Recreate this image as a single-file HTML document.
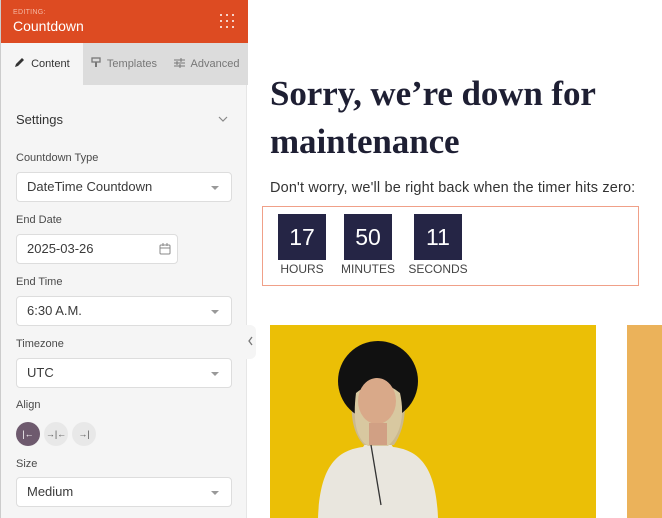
<!DOCTYPE html>
<html><head><meta charset="utf-8"><style>
*{box-sizing:border-box;margin:0;padding:0}
body{width:662px;height:518px;overflow:hidden;background:#fff;font-family:"Liberation Sans",sans-serif;position:relative}
.side{position:absolute;left:0;top:0;width:247px;height:518px;background:#f5f5f5;border-left:1px solid #ccc;border-right:1px solid #e6e6e6}
.hdr{position:absolute;left:0;top:0;width:247px;height:43px;background:#dd4b22}
.hdr .e{position:absolute;left:12px;top:9px;font-size:7px;color:#f4b8a5;letter-spacing:.3px}
.hdr .t{position:absolute;left:12px;top:18px;font-size:14px;color:#fff}
.dots{position:absolute;left:219px;top:14px;width:14px;height:14px;display:grid;grid-template-columns:repeat(3,2px);gap:4px}
.dots i{width:2px;height:2px;background:#fff;border-radius:1px}
.tabs{position:absolute;left:0;top:43px;width:247px;height:42px}
.tab{position:absolute;top:0;height:42px;font-size:11px;line-height:42px;color:#777}
.lbl{position:absolute;left:15px;font-size:11px;color:#4a4a4a}
.inp{position:absolute;left:15px;width:216px;height:30px;background:#fff;border:1px solid #ddd;border-radius:4px;font-size:13px;color:#3a3a3a;line-height:28px;padding-left:10px}
.inp .car{position:absolute;right:12px;top:13px;border-left:4px solid transparent;border-right:4px solid transparent;border-top:4px solid #999}
.al{position:absolute;top:422px;width:24px;height:24px;border-radius:12px;background:#e8e8e8;font-size:9px;color:#555;text-align:center;line-height:24px}
h1{position:absolute;left:270px;top:70px;font-family:"Liberation Serif",serif;font-weight:bold;font-size:35px;line-height:48px;color:#1e1f33;letter-spacing:-.1px}
.sub{position:absolute;left:270px;top:180px;font-size:14.5px;color:#333;letter-spacing:.15px}
.cd{position:absolute;left:262px;top:206px;width:377px;height:80px;border:1.5px solid #f0a088}
.box{position:absolute;top:214px;width:48px;height:46px;background:#252545;color:#fff;font-size:23px;text-align:center;line-height:46px}
.cl{position:absolute;top:262px;font-size:12px;color:#444;text-align:center}
</style></head><body>
<div class="side">
 <div class="hdr"><div class="e">EDITING:</div><div class="t">Countdown</div>
  <div class="dots"><i></i><i></i><i></i><i></i><i></i><i></i><i></i><i></i><i></i></div></div>
 <div class="tabs">
  <div style="position:absolute;left:82px;top:0;width:165px;height:42px;background:#dcdcdc"></div>
  <div class="tab" style="left:13px;color:#333"><svg width="11" height="11" viewBox="0 0 11 11" style="vertical-align:-1px"><path d="M1 10 L2 7 L8 1 L10 3 L4 9 Z" fill="#333"/></svg>&nbsp; Content</div>
  <div class="tab" style="left:90px"><svg width="10" height="11" viewBox="0 0 10 11" style="vertical-align:-1px"><rect x="1" y="1" width="8" height="4" fill="none" stroke="#777" stroke-width="1.3"/><path d="M5 5v5" stroke="#777" stroke-width="2"/></svg>&nbsp; Templates</div>
  <div class="tab" style="left:173px"><svg width="11" height="10" viewBox="0 0 11 10" style="vertical-align:-1px"><path d="M0 2h11M0 5h11M0 8h11" stroke="#777"/><path d="M7 0v4M3 3v4M6 6v4" stroke="#777"/></svg>&nbsp; Advanced</div>
 </div>
 <div style="position:absolute;left:15px;top:112px;font-size:13px;color:#333">Settings</div>
 <svg style="position:absolute;left:217px;top:116px" width="10" height="6"><path d="M1 1l4 4 4-4" fill="none" stroke="#888" stroke-width="1.2"/></svg>
 <div class="lbl" style="top:152px">Countdown Type</div>
 <div class="inp" style="top:172px">DateTime Countdown<div class="car"></div></div>
 <div class="lbl" style="top:214px">End Date</div>
 <div class="inp" style="top:234px;width:162px">2025-03-26<svg style="position:absolute;right:6px;top:8px" width="12" height="12"><rect x="1" y="2" width="10" height="9" rx="1" fill="none" stroke="#888"/><path d="M1 5h10M4 0v3M8 0v3" stroke="#888"/></svg></div>
 <div class="lbl" style="top:276px">End Time</div>
 <div class="inp" style="top:296px">6:30 A.M.<div class="car"></div></div>
 <div class="lbl" style="top:338px">Timezone</div>
 <div class="inp" style="top:358px">UTC<div class="car"></div></div>
 <div class="lbl" style="top:399px">Align</div>
 <div class="al" style="left:15px;background:#6e5a6e;color:#fff">|←</div>
 <div class="al" style="left:43px">→|←</div>
 <div class="al" style="left:71px">→|</div>
 <div class="lbl" style="top:458px">Size</div>
 <div class="inp" style="top:477px">Medium<div class="car"></div></div>
</div>
<div style="position:absolute;left:240px;top:325px;width:16px;height:34px;background:#f5f5f5;border-radius:0 6px 6px 0"></div>
<svg style="position:absolute;left:247px;top:336px" width="7" height="10"><path d="M5 1L2 5l3 4" fill="none" stroke="#777" stroke-width="1.3"/></svg>
<h1>Sorry, we’re down for<br>maintenance</h1>
<div class="sub">Don't worry, we'll be right back when the timer hits zero:</div>
<div class="cd"></div>
<div class="box" style="left:278px">17</div><div class="cl" style="left:278px;width:48px">HOURS</div>
<div class="box" style="left:344px">50</div><div class="cl" style="left:338px;width:60px">MINUTES</div>
<div class="box" style="left:414px">11</div><div class="cl" style="left:406px;width:64px">SECONDS</div>
<svg style="position:absolute;left:270px;top:325px" width="326" height="193">
 <rect width="326" height="193" fill="#e8bc0a"/>
 <rect width="326" height="193" fill="#f0c400" opacity=".4"/>
 <g transform="translate(8,0)">
 <path d="M40 193 C42 140 60 125 85 122 L92 112 L108 112 L115 122 C140 125 158 140 160 193Z" fill="#e9e6de"/>
 <path d="M76 60 C70 90 76 110 86 120 L116 120 C126 105 130 85 124 60Z" fill="#cbb98e"/>
 <ellipse cx="100" cy="56" rx="40" ry="40" fill="#111"/>
 <path d="M78 68 C74 100 80 115 90 121 L110 121 C120 112 128 95 122 68 Q100 50 78 68Z" fill="#d8c8a0"/>
 <ellipse cx="99" cy="76" rx="19" ry="23" fill="#d9a989"/>
 <path d="M91 98 v22 h18 v-22Z" fill="#d1a084"/>
 <path d="M93 120 L103 180" stroke="#333" stroke-width="1.3"/>
 </g>
</svg>
<div style="position:absolute;left:627px;top:325px;width:35px;height:193px;background:#ebb25a"></div>
</body></html>
